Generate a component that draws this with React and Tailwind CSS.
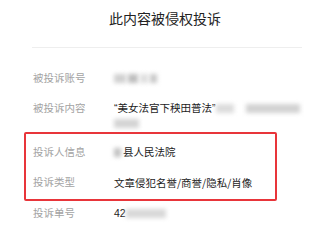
import React from 'react';

const font = { fontFamily: '"Liberation Sans", "Noto Sans CJK SC", sans-serif' };
const cjk = { fontFamily: '"Noto Sans CJK SC", sans-serif' };

// ── Blurred redaction blob ────────────────────────────────────
function Blur({ w, tone = 'bg-[#d6d6d6]', className = '' }) {
  return (
    <span
      className={`inline-block h-[9px] align-middle blur-[2px] ${tone} ${className}`}
      style={{ width: w }}
    />
  );
}

function Row({ label, children, className = '' }) {
  return (
    <div className={`flex text-[10.5px] leading-[15px] ${className}`}>
      <div className="w-[81px] shrink-0 text-[#a3a3a3]">{label}</div>
      <div className="flex-1 text-[#1c1c1c]">{children}</div>
    </div>
  );
}

export default function App() {
  return (
    <div className="w-[330px] h-[225px] bg-white overflow-hidden" style={font}>
      <div className="pt-[11px] text-center text-[14px] leading-[17px] text-[#222]">此内容被侵权投诉</div>
      <div className="mt-[19px] ml-[32px] mr-[28px] h-px bg-[#eeeeee]" />

      <Row label="被投诉账号" className="pl-[33px] mt-[16px] py-[7px]">
        <span className="inline-flex items-center gap-[2px] h-[15px]">
          <Blur w={12} tone="bg-[#d0d0d0]" />
          <Blur w={10} tone="bg-[#bdbdbd]" />
          <Blur w={8} tone="bg-[#dedede]" />
          <Blur w={7} tone="bg-[#c8c8c8]" />
        </span>
      </Row>

      <Row label="被投诉内容" className="pl-[33px] pt-[7px]">
        <div className="flex items-center">
          <span>“美女法官下秧田普法”</span>
          <Blur w={18} tone="bg-[#dcdcdc]" />
          <Blur w={54} tone="bg-[#d2d2d2]" className="ml-[12px]" />
        </div>
        <div className="flex items-center h-[15px]">
          <Blur w={25} tone="bg-[#d4d4d4]" />
        </div>
      </Row>

      <div className="mt-px ml-[24px] w-[253px] border-2 border-[#e8353a] rounded-[2px] pl-[7px] pt-[4px] pb-px">
        <Row label="投诉人信息" className="py-[7px]">
          <span className="inline-flex items-center">
            <Blur w={7} tone="bg-[#c0c0c0]" className="mr-[2px]" />
            <span>县人民法院</span>
          </span>
        </Row>
        <Row label="投诉类型" className="py-[7px]">
          <span style={cjk}>文章侵犯名誉/商誉/隐私/肖像</span>
        </Row>
      </div>

      <Row label="投诉单号" className="pl-[33px] pt-[5px]">
        <span className="inline-flex items-center">
          <span>42</span>
          <Blur w={40} tone="bg-[#d8d8d8]" />
        </span>
      </Row>
    </div>
  );
}
